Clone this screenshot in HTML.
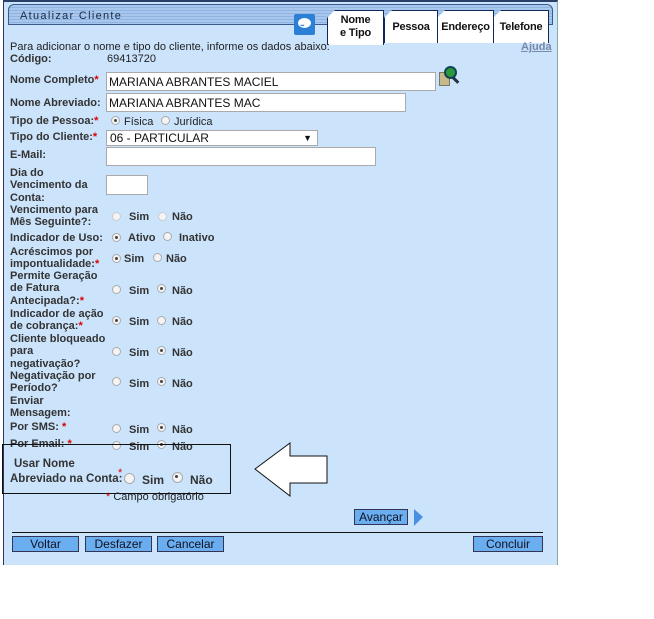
<!DOCTYPE html>
<html><head><meta charset="utf-8"><style>
body{margin:0;width:654px;height:619px;background:#fff;position:relative;overflow:hidden;font-family:"Liberation Sans",Arial,sans-serif;font-size:11px;color:#222}
.a{position:absolute;white-space:nowrap}
.b{font-weight:bold;color:#333}
.l{position:absolute;font-weight:bold;color:#333;line-height:12.3px;left:10px}
.s{color:#d00}
.in{position:absolute;background:#fff;border:1px solid #aaa;box-sizing:border-box;font-size:12px;padding:2px 2px;color:#111}
.r{position:absolute;width:9px;height:9px;border-radius:50%;border:1px solid #aaa;background:#f4f4f4;box-sizing:border-box}
.r.on::after{content:"";position:absolute;left:2px;top:2px;width:3px;height:3px;border-radius:50%;background:#444}
.btn{position:absolute;top:536px;height:16px;background:#6aaef0;border:1px solid #335;box-sizing:border-box;text-align:center;font-size:12px;line-height:14px;color:#112}
.tab{position:absolute;background:#fff;border:1px solid #0b2a5a;border-bottom:none;top:10px;height:33px;box-sizing:border-box;font-weight:bold;font-size:11px;letter-spacing:-0.2px;text-align:center;color:#111;clip-path:polygon(8px 0,100% 0,100% 100%,0 100%,0 8px)}
.bx{position:absolute;font-weight:bold;font-size:11.5px;color:#333}
</style></head><body>
<div class="a" style="left:3px;top:0;width:555px;height:565px;background:#cbe3fb;border-left:1px solid #335;border-top:2px solid #2a3f66;border-right:1px solid #8aa;box-sizing:border-box"></div>
<div class="a" style="left:8px;top:4px;width:545px;height:21px;border:1px solid #3a5a8a;border-radius:6px 6px 0 0;background:repeating-linear-gradient(#a9c7ec 0 2px,#8db4e3 2px 3px);box-sizing:border-box"></div>
<div class="a" style="left:20px;top:10px;font-size:11px;letter-spacing:1.3px;color:#1a2a44">Atualizar Cliente</div>
<div class="a" style="left:294px;top:14px;width:21px;height:21px;background:#2b7fd4;border-radius:2px"></div>
<div class="a" style="left:298px;top:18px;width:13px;height:10px;background:#fff;border-radius:50%"></div>
<div class="a" style="left:300px;top:19px;font-size:8px;color:#2b7fd4;font-weight:bold;letter-spacing:-1px">...</div>
<div class="tab" style="left:327px;width:57px;height:35px;line-height:13px;padding-top:3px">Nome<br>e Tipo</div>
<div class="tab" style="left:384px;width:54px;line-height:32px">Pessoa</div>
<div class="tab" style="left:437px;width:57px;line-height:32px">Endereço</div>
<div class="tab" style="left:493px;width:56px;line-height:32px">Telefone</div>
<div class="a" style="left:10px;top:41px">Para adicionar o nome e tipo do cliente, informe os dados abaixo:</div>
<div class="a" style="left:521px;top:41px;color:#7788aa;text-decoration:underline;font-weight:bold">Ajuda</div>
<div class="a b" style="left:10px;top:53px">Código:</div>
<div class="a" style="left:107px;top:53px">69413720</div>
<div class="a b" style="left:10px;top:74px">Nome Completo<span class="s">*</span></div>
<div class="in" style="left:106px;top:72px;width:330px;height:19px">MARIANA ABRANTES MACIEL</div>
<div class="a" style="left:439px;top:72px;width:9px;height:12px;background:#c9b98a;border:1px solid #776"></div>
<div class="a" style="left:444px;top:66px;width:9px;height:9px;border-radius:50%;background:#2a9a3a;border:2px solid #145"></div>
<div class="a" style="left:454px;top:76px;width:3px;height:8px;background:#234;transform:rotate(-45deg)"></div>
<div class="a b" style="left:10px;top:97px">Nome Abreviado:</div>
<div class="in" style="left:106px;top:93px;width:300px;height:19px">MARIANA ABRANTES MAC</div>
<div class="a b" style="left:10px;top:115px">Tipo de Pessoa:<span class="s">*</span></div>
<div class="r on" style="left:111px;top:116px"></div><div class="a" style="left:124px;top:116px">Física</div>
<div class="r" style="left:161px;top:116px"></div><div class="a" style="left:174px;top:116px">Jurídica</div>
<div class="a b" style="left:10px;top:131px">Tipo do Cliente:<span class="s">*</span></div>
<div class="in" style="left:106px;top:130px;width:212px;height:16px;padding:0 3px;line-height:14px">06 - PARTICULAR<span style="position:absolute;right:5px;font-size:9px">▼</span></div>
<div class="a b" style="left:10px;top:149px">E-Mail:</div>
<div class="in" style="left:106px;top:147px;width:270px;height:19px"></div>
<div class="l" style="top:167px">Dia do<br>Vencimento da<br>Conta:</div>
<div class="in" style="left:106px;top:175px;width:42px;height:20px"></div>
<div class="l" style="top:204px">Vencimento para<br>Mês Seguinte?:</div>
<div class="r" style="left:112px;top:212px;border-color:#ccc"></div><div class="a b" style="left:129px;top:211px">Sim</div>
<div class="r" style="left:158px;top:212px;border-color:#ccc"></div><div class="a b" style="left:172px;top:211px">Não</div>
<div class="l" style="top:232px">Indicador de Uso:</div>
<div class="r on" style="left:112px;top:233px"></div><div class="a b" style="left:128px;top:232px">Ativo</div>
<div class="r" style="left:163px;top:232px"></div><div class="a b" style="left:179px;top:232px">Inativo</div>
<div class="l" style="top:246px">Acréscimos por<br>impontualidade:<span class="s">*</span></div>
<div class="r on" style="left:112px;top:254px"></div><div class="a b" style="left:124px;top:253px">Sim</div>
<div class="r" style="left:153px;top:253px"></div><div class="a b" style="left:166px;top:253px">Não</div>
<div class="l" style="top:270px">Permite Geração<br>de Fatura<br>Antecipada?:<span class="s">*</span></div>
<div class="r" style="left:112px;top:285px"></div><div class="a b" style="left:129px;top:285px">Sim</div>
<div class="r on" style="left:157px;top:284px"></div><div class="a b" style="left:172px;top:285px">Não</div>
<div class="l" style="top:308px">Indicador de ação<br>de cobrança:<span class="s">*</span></div>
<div class="r on" style="left:112px;top:316px"></div><div class="a b" style="left:129px;top:316px">Sim</div>
<div class="r" style="left:157px;top:316px"></div><div class="a b" style="left:172px;top:316px">Não</div>
<div class="l" style="top:333px">Cliente bloqueado<br>para<br>negativação?</div>
<div class="r" style="left:112px;top:347px"></div><div class="a b" style="left:129px;top:347px">Sim</div>
<div class="r on" style="left:157px;top:346px"></div><div class="a b" style="left:172px;top:347px">Não</div>
<div class="l" style="top:370px">Negativação por<br>Período?</div>
<div class="r" style="left:112px;top:377px"></div><div class="a b" style="left:129px;top:378px">Sim</div>
<div class="r on" style="left:157px;top:377px"></div><div class="a b" style="left:172px;top:378px">Não</div>
<div class="l" style="top:395px">Enviar<br>Mensagem:</div>
<div class="l" style="top:421px">Por SMS: <span class="s">*</span></div>
<div class="r" style="left:112px;top:424px"></div><div class="a b" style="left:129px;top:424px">Sim</div>
<div class="r on" style="left:157px;top:423px"></div><div class="a b" style="left:172px;top:424px">Não</div>
<div class="l" style="top:438px">Por Email: <span class="s">*</span></div>
<div class="r" style="left:112px;top:441px"></div><div class="a b" style="left:129px;top:441px">Sim</div>
<div class="r on" style="left:157px;top:440px"></div><div class="a b" style="left:172px;top:441px">Não</div>
<div class="a" style="left:2px;top:444px;width:229px;height:50px;border:1px solid #111;box-sizing:border-box"></div>
<div class="a bx" style="left:14px;top:458px">Usar Nome</div>
<div class="a bx" style="left:10px;top:473px">Abreviado na Conta:</div>
<div class="a s" style="left:118px;top:467px">*</div>
<div class="r" style="left:124px;top:473px;width:11px;height:11px"></div>
<div class="a bx" style="left:142px;top:473px;font-size:12px">Sim</div>
<div class="r on" style="left:172px;top:472px;width:11px;height:11px"></div>
<div class="a bx" style="left:190px;top:473px;font-size:12px">Não</div>
<svg class="a" style="left:0;top:0" width="654" height="619"><polygon points="255,469 290,443 290,456 327,456 327,483 290,483 290,496" fill="#fff" stroke="#111" stroke-width="1"/><polygon points="414,509 423,517 414,526" fill="#4a90e2"/></svg>
<div class="a" style="left:106px;top:491px"><span class="s">*</span> Campo obrigatório</div>
<div class="btn" style="left:354px;top:509px;width:54px">Avançar</div>
<div class="a" style="left:12px;top:532px;width:531px;height:1px;background:#111"></div>
<div class="btn" style="left:12px;width:67px">Voltar</div>
<div class="btn" style="left:85px;width:67px">Desfazer</div>
<div class="btn" style="left:157px;width:67px">Cancelar</div>
<div class="btn" style="left:473px;width:70px">Concluir</div>
</body></html>
